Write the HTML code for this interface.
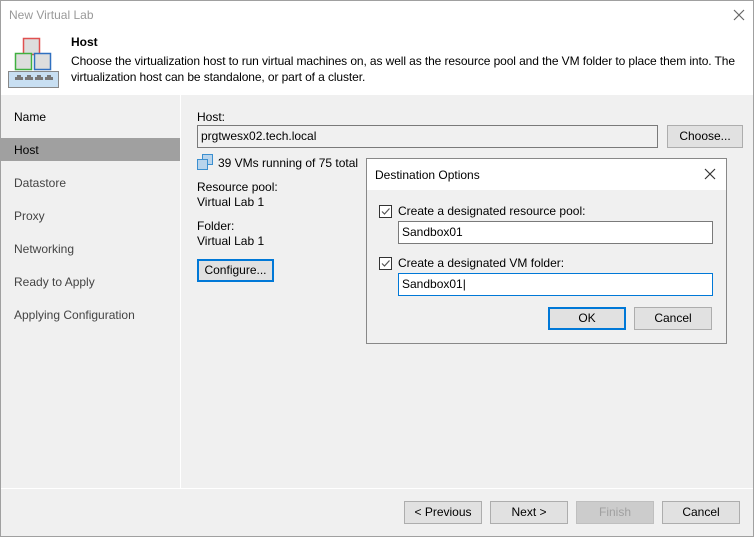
<!DOCTYPE html>
<html><head><style>
*{box-sizing:border-box;margin:0;padding:0}
body{width:754px;height:537px;position:relative;overflow:hidden;font-family:"Liberation Sans",sans-serif;font-size:12px;color:#000;background:#f0f0f0}
.a{position:absolute}
.btn{position:absolute;height:23px;border:1px solid #adadad;background:#e1e1e1;text-align:center;line-height:21px;font-size:12px}
.inp{position:absolute;height:23px;border:1px solid #7a7a7a;background:#fff;padding-left:3px;line-height:21px}
.nav{position:absolute;left:14px}
.cb{position:absolute;width:13px;height:13px;border:1px solid #333;background:#fff}
</style></head><body>
<div class="a" style="left:0;top:0;width:754px;height:537px;border:1px solid #a0a0a0"></div>
<div class="a" style="left:1px;top:1px;width:752px;height:94px;background:#fff"></div>
<div class="a" style="left:9px;top:8px;color:#999;font-size:12px">New Virtual Lab</div>
<svg class="a" style="left:733px;top:9px" width="12" height="12"><path d="M1 1L11 11M11 1L1 11" stroke="#666" stroke-width="1.2"/></svg>
<svg class="a" style="left:8px;top:37px" width="52" height="52">
<rect x="15.5" y="1.5" width="16" height="16" fill="#ddd" stroke="#e05050" stroke-width="1.5"/>
<rect x="7.5" y="16.5" width="16" height="16" fill="#ddd" stroke="#40b040" stroke-width="1.5"/>
<rect x="26.5" y="16.5" width="16" height="16" fill="#ddd" stroke="#3070c0" stroke-width="1.5"/>
<rect x="0.5" y="34.5" width="50" height="16" fill="#c8dff2" stroke="#888"/>
<g fill="#777"><path d="M7 43h8v-3h-2v-2h-4v2h-2z"/><path d="M17 43h8v-3h-2v-2h-4v2h-2z"/><path d="M27 43h8v-3h-2v-2h-4v2h-2z"/><path d="M37 43h8v-3h-2v-2h-4v2h-2z"/></g>
</svg>
<div class="a" style="left:71px;top:35px;font-weight:bold">Host</div>
<div class="a" style="left:71px;top:53px;width:680px;line-height:16px;letter-spacing:-0.1px">Choose the virtualization host to run virtual machines on, as well as the resource pool and the VM folder to place them into. The virtualization host can be standalone, or part of a cluster.</div>
<div class="a" style="left:180px;top:95px;width:1px;height:393px;background:#fff"></div>
<div class="a" style="left:1px;top:138px;width:179px;height:23px;background:#a0a0a0"></div>
<div class="nav" style="top:110px">Name</div>
<div class="nav" style="top:143px">Host</div>
<div class="nav" style="top:176px;color:#444">Datastore</div>
<div class="nav" style="top:209px;color:#444">Proxy</div>
<div class="nav" style="top:242px;color:#444">Networking</div>
<div class="nav" style="top:275px;color:#444">Ready to Apply</div>
<div class="nav" style="top:308px;color:#444">Applying Configuration</div>
<div class="a" style="left:197px;top:110px">Host:</div>
<div class="inp" style="left:197px;top:125px;width:461px;background:#f0f0f0">prgtwesx02.tech.local</div>
<div class="btn" style="left:667px;top:125px;width:76px">Choose...</div>
<svg class="a" style="left:197px;top:154px" width="17" height="17"><rect x="5.5" y="0.5" width="10" height="10" fill="#b8d4ec" stroke="#3b8fd0"/><rect x="0.5" y="5.5" width="10" height="10" fill="#b8d4ec" stroke="#3b8fd0"/></svg>
<div class="a" style="left:218px;top:156px">39 VMs running of 75 total</div>
<div class="a" style="left:197px;top:180px">Resource pool:</div>
<div class="a" style="left:197px;top:195px">Virtual Lab 1</div>
<div class="a" style="left:197px;top:219px">Folder:</div>
<div class="a" style="left:197px;top:234px">Virtual Lab 1</div>
<div class="btn" style="left:197px;top:259px;width:77px;border:2px solid #0078d7;line-height:19px">Configure...</div>
<div class="a" style="left:366px;top:158px;width:361px;height:186px;border:1px solid #888;background:#f0f0f0"></div>
<div class="a" style="left:367px;top:159px;width:359px;height:31px;background:#fff"></div>
<div class="a" style="left:375px;top:168px">Destination Options</div>
<svg class="a" style="left:704px;top:168px" width="12" height="12"><path d="M1 1L11 11M11 1L1 11" stroke="#333" stroke-width="1.2"/></svg>
<div class="cb" style="left:379px;top:205px"><svg width="11" height="11" style="display:block"><path d="M2 5.5L4.5 8L9.5 2.5" stroke="#555" fill="none" stroke-width="1.2"/></svg></div>
<div class="a" style="left:398px;top:204px">Create a designated resource pool:</div>
<div class="inp" style="left:398px;top:221px;width:315px">Sandbox01</div>
<div class="cb" style="left:379px;top:257px"><svg width="11" height="11" style="display:block"><path d="M2 5.5L4.5 8L9.5 2.5" stroke="#555" fill="none" stroke-width="1.2"/></svg></div>
<div class="a" style="left:398px;top:256px">Create a designated VM folder:</div>
<div class="inp" style="left:398px;top:273px;width:315px;border-color:#0078d7">Sandbox01|</div>
<div class="btn" style="left:548px;top:307px;width:78px;border:2px solid #0078d7;line-height:19px">OK</div>
<div class="btn" style="left:634px;top:307px;width:78px">Cancel</div>
<div class="a" style="left:1px;top:488px;width:752px;height:1px;background:#fff"></div>
<div class="btn" style="left:404px;top:501px;width:78px">&lt; Previous</div>
<div class="btn" style="left:490px;top:501px;width:78px">Next &gt;</div>
<div class="btn" style="left:576px;top:501px;width:78px;background:#ccc;border-color:#bfbfbf;color:#a0a0a0">Finish</div>
<div class="btn" style="left:662px;top:501px;width:78px">Cancel</div>
</body></html>
